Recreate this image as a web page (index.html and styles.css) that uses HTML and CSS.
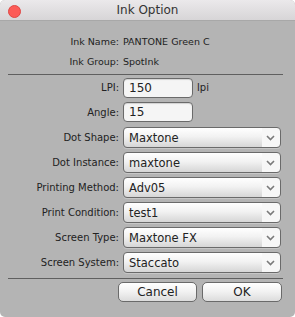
FILE: index.html
```html
<!DOCTYPE html>
<html lang="en">
<head>
    <meta charset="UTF-8">
    <title>Ink Option</title>
    <link rel="stylesheet" href="styles.css">
</head>
<body>
    <div class="window">
        <div class="titlebar">
            <span class="close"></span>
            <span class="title">Ink Option</span>
        </div>

        <div class="info">
            <span class="label">Ink Name:</span>
            <span class="value">PANTONE Green C</span>
            <span class="label">Ink Group:</span>
            <span class="value">SpotInk</span>
        </div>

        <div class="sep"></div>

        <div class="form">
            <span class="label">LPI:</span>
            <div class="field-unit">
                <div class="textbox">150</div>
                <span class="unit">lpi</span>
            </div>

            <span class="label">Angle:</span>
            <div class="textbox">15</div>

            <span class="label">Dot Shape:</span>
            <div class="select"><span>Maxtone</span><svg class="chev" width="9" height="6" viewBox="0 0 9 6"><polyline points="1,1 4.5,4.5 8,1" /></svg></div>

            <span class="label">Dot Instance:</span>
            <div class="select"><span>maxtone</span><svg class="chev" width="9" height="6" viewBox="0 0 9 6"><polyline points="1,1 4.5,4.5 8,1" /></svg></div>

            <span class="label">Printing Method:</span>
            <div class="select"><span>Adv05</span><svg class="chev" width="9" height="6" viewBox="0 0 9 6"><polyline points="1,1 4.5,4.5 8,1" /></svg></div>

            <span class="label">Print Condition:</span>
            <div class="select"><span>test1</span><svg class="chev" width="9" height="6" viewBox="0 0 9 6"><polyline points="1,1 4.5,4.5 8,1" /></svg></div>

            <span class="label">Screen Type:</span>
            <div class="select"><span>Maxtone FX</span><svg class="chev" width="9" height="6" viewBox="0 0 9 6"><polyline points="1,1 4.5,4.5 8,1" /></svg></div>

            <span class="label">Screen System:</span>
            <div class="select"><span>Staccato</span><svg class="chev" width="9" height="6" viewBox="0 0 9 6"><polyline points="1,1 4.5,4.5 8,1" /></svg></div>
        </div>

        <div class="sep sep-bottom"></div>

        <div class="buttons">
            <button class="btn btn-cancel">Cancel</button>
            <button class="btn btn-ok">OK</button>
        </div>
    </div>
</body>
</html>
```

FILE: styles.css
```css
html, body {
    margin: 0;
    padding: 0;
    background: #ffffff;
}

body {
    font-family: "DejaVu Sans", "Liberation Sans", sans-serif;
    color: #222222;
}

.window {
    width: 295px;
    height: 317px;
    background-color: #b4b4b4;
    border-radius: 5px;
    overflow: hidden;
    display: flex;
    flex-direction: column;
}

.titlebar {
    height: 20px;
    background: linear-gradient(#ebe9eb, #d7d5d7);
    border-bottom: 1px solid #a8a8a8;
    display: flex;
    align-items: center;
    justify-content: center;
    position: relative;
}

.close {
    position: absolute;
    left: 8px;
    top: 5px;
    width: 11px;
    height: 11px;
    border-radius: 50%;
    background-color: #fc5b57;
    border: 0.5px solid #df4744;
}

.title {
    font-size: 12px;
    color: #333333;
}

.info,
.form {
    display: grid;
    grid-template-columns: 115px auto;
    column-gap: 4px;
    padding-left: 4px;
}

.info {
    padding-top: 10px;
    grid-auto-rows: 20px;
    align-items: center;
    font-size: 9.5px;
}

.info .label {
    font-size: 9.5px;
}

.label {
    text-align: right;
    font-size: 10px;
}

.sep {
    height: 1px;
    background-color: #5f5f5f;
    margin: 3px 12px 0 8px;
}

.form {
    padding-top: 2px;
    grid-auto-rows: 21px;
    row-gap: 4px;
    align-items: center;
}

.field-unit {
    display: flex;
    align-items: center;
    gap: 4px;
}

.textbox {
    align-self: start;
    width: 63px;
    height: 18px;
    line-height: 18px;
    padding-left: 5px;
    font-size: 12px;
    background-color: #f5f5f5;
    border: 1px solid #6a6a6a;
    border-radius: 4px;
    box-shadow: inset 0 1px 1px rgba(0, 0, 0, 0.15);
}

.unit {
    font-size: 10px;
    margin-top: -1px;
}

.select {
    width: 151px;
    height: 19px;
    padding-left: 5px;
    font-size: 11.5px;
    display: flex;
    align-items: center;
    justify-content: space-between;
    border: 1px solid #6a6a6a;
    border-radius: 4px;
    background:
        linear-gradient(#f7f7f7, #f7f7f7) right / 18px 100% no-repeat,
        linear-gradient(#ffffff, #f2f2f2 45%, #d6d6d6);
    box-shadow: 0 1px 0 rgba(255, 255, 255, 0.25);
}

.chev {
    margin-right: 5px;
    fill: none;
    stroke: #7a7a7a;
    stroke-width: 1.6;
}

.sep-bottom {
    margin-top: 5px;
}

.buttons {
    display: flex;
    justify-content: flex-end;
    gap: 5px;
    padding: 3px 13px 0 0;
}

.btn {
    height: 20px;
    padding: 0;
    font-family: "DejaVu Sans", "Liberation Sans", sans-serif;
    font-size: 12px;
    color: #222222;
    border: 1px solid #6a6a6a;
    border-radius: 5px;
    background: linear-gradient(#ffffff, #f1f1f1 50%, #dcdcdc);
}

.btn-cancel {
    width: 79px;
}

.btn-ok {
    width: 80px;
}
```
